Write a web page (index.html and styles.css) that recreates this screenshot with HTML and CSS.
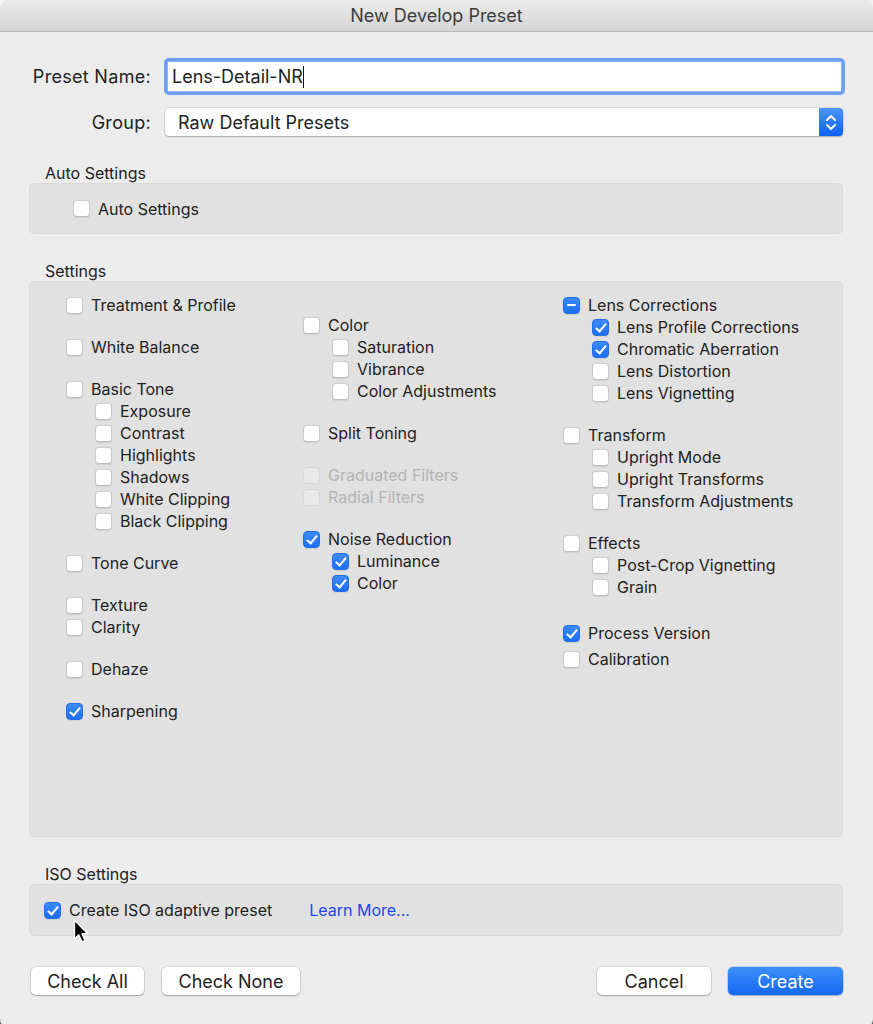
FILE: index.html
```html
<!DOCTYPE html>
<html lang="en">
<head>
<meta charset="utf-8">
<title>New Develop Preset</title>
<link rel="stylesheet" href="styles.css">
</head>
<body>
<div class="window">
  <div class="titlebar">New Develop Preset</div>
  <main class="content">
    <div class="form-row">
      <span class="form-label">Preset Name:</span>
      <div class="text-input">Lens-Detail-NR<span class="caret"></span></div>
    </div>
    <div class="form-row row-group">
      <span class="form-label">Group:</span>
      <div class="select">
        <span class="select-value">Raw Default Presets</span>
        <span class="stepper">
          <svg width="24" height="28" viewBox="0 0 24 28"><path d="M8 12 L12 8 L16 12" fill="none" stroke="#fff" stroke-width="2" stroke-linecap="round" stroke-linejoin="round"/><path d="M8 17 L12 21 L16 17" fill="none" stroke="#fff" stroke-width="2" stroke-linecap="round" stroke-linejoin="round"/></svg>
        </span>
      </div>
    </div>

    <section class="section">
      <h2 class="section-title">Auto Settings</h2>
      <div class="box box-auto">
        <label class="item"><span class="cb"></span>Auto Settings</label>
      </div>
    </section>

    <section class="section">
      <h2 class="section-title">Settings</h2>
      <div class="box box-settings">
        <div class="col col1">
          <div class="grp"><label class="item"><span class="cb"></span>Treatment &amp; Profile</label></div>
          <div class="grp"><label class="item"><span class="cb"></span>White Balance</label></div>
          <div class="grp">
            <label class="item"><span class="cb"></span>Basic Tone</label>
            <label class="item sub"><span class="cb"></span>Exposure</label>
            <label class="item sub"><span class="cb"></span>Contrast</label>
            <label class="item sub"><span class="cb"></span>Highlights</label>
            <label class="item sub"><span class="cb"></span>Shadows</label>
            <label class="item sub"><span class="cb"></span>White Clipping</label>
            <label class="item sub"><span class="cb"></span>Black Clipping</label>
          </div>
          <div class="grp"><label class="item"><span class="cb"></span>Tone Curve</label></div>
          <div class="grp">
            <label class="item"><span class="cb"></span>Texture</label>
            <label class="item"><span class="cb"></span>Clarity</label>
          </div>
          <div class="grp"><label class="item"><span class="cb"></span>Dehaze</label></div>
          <div class="grp"><label class="item"><span class="cb on"></span>Sharpening</label></div>
        </div>
        <div class="col col2">
          <div class="grp">
            <label class="item"><span class="cb"></span>Color</label>
            <label class="item sub"><span class="cb"></span>Saturation</label>
            <label class="item sub"><span class="cb"></span>Vibrance</label>
            <label class="item sub"><span class="cb"></span>Color Adjustments</label>
          </div>
          <div class="grp"><label class="item"><span class="cb"></span>Split Toning</label></div>
          <div class="grp">
            <label class="item dis"><span class="cb"></span>Graduated Filters</label>
            <label class="item dis"><span class="cb"></span>Radial Filters</label>
          </div>
          <div class="grp">
            <label class="item"><span class="cb on"></span>Noise Reduction</label>
            <label class="item sub"><span class="cb on"></span>Luminance</label>
            <label class="item sub"><span class="cb on"></span>Color</label>
          </div>
        </div>
        <div class="col col3">
          <div class="grp">
            <label class="item"><span class="cb mixed"></span>Lens Corrections</label>
            <label class="item sub"><span class="cb on"></span>Lens Profile Corrections</label>
            <label class="item sub"><span class="cb on"></span>Chromatic Aberration</label>
            <label class="item sub"><span class="cb"></span>Lens Distortion</label>
            <label class="item sub"><span class="cb"></span>Lens Vignetting</label>
          </div>
          <div class="grp">
            <label class="item"><span class="cb"></span>Transform</label>
            <label class="item sub"><span class="cb"></span>Upright Mode</label>
            <label class="item sub"><span class="cb"></span>Upright Transforms</label>
            <label class="item sub"><span class="cb"></span>Transform Adjustments</label>
          </div>
          <div class="grp">
            <label class="item"><span class="cb"></span>Effects</label>
            <label class="item sub"><span class="cb"></span>Post-Crop Vignetting</label>
            <label class="item sub"><span class="cb"></span>Grain</label>
          </div>
          <div class="grp grp-process">
            <label class="item"><span class="cb on"></span>Process Version</label>
            <label class="item item-calib"><span class="cb"></span>Calibration</label>
          </div>
        </div>
      </div>
    </section>

    <section class="section">
      <h2 class="section-title">ISO Settings</h2>
      <div class="box box-iso">
        <label class="item"><span class="cb on"></span>Create ISO adaptive preset</label>
        <a class="learn-more">Learn More...</a>
        <svg class="cursor" width="17" height="25" viewBox="0 0 17 25"><path d="M1.5 1.2 L1.5 19.8 L5.8 15.8 L8.9 22.8 L12 21.5 L9 14.7 L14.8 14.7 Z" fill="#000" stroke="#fff" stroke-width="1.3" stroke-linejoin="round"/></svg>
      </div>
    </section>

    <footer class="footer">
      <div class="btn-group">
        <button class="btn btn-check-all">Check All</button>
        <button class="btn btn-check-none">Check None</button>
      </div>
      <div class="btn-group">
        <button class="btn btn-cancel">Cancel</button>
        <button class="btn btn-primary">Create</button>
      </div>
    </footer>
  </main>
</div>
</body>
</html>
```

FILE: styles.css
```css
* { box-sizing: border-box; }

html, body {
  margin: 0;
  padding: 0;
}

html {
  background: linear-gradient(#f2f2f2 50%, #5a5a5a 50%);
}

body {
  font-family: Inter, "Liberation Sans", sans-serif;
  color: #222;
  width: 873px;
  height: 1024px;
  overflow: hidden;
}

.window {
  background: #ececec;
  height: 1028px;
  border-radius: 9px;
  overflow: hidden;
}

.titlebar {
  height: 32px;
  background: linear-gradient(#ebebeb, #d4d4d4);
  border-bottom: 1px solid #b4b4b4;
  text-align: center;
  font-size: 18px;
  line-height: 32px;
  color: #3b3b3b;
}

.content {
  padding: 29px 30px 0 29px;
}

.form-row {
  display: grid;
  grid-template-columns: 122px 1fr;
  column-gap: 14px;
  align-items: center;
}

.row-group {
  margin-top: 16px;
}

.form-label {
  text-align: right;
  font-size: 18px;
  letter-spacing: 0.3px;
}

.text-input {
  height: 31px;
  margin: 0 1px 0 2px;
  background: #fff;
  border: 1px solid #8fb4f2;
  border-radius: 2px;
  box-shadow: 0 0 0 3px #6d9ef2;
  font-size: 18px;
  line-height: 29px;
  padding-left: 4px;
  display: flex;
  align-items: center;
}

.caret {
  display: inline-block;
  width: 1px;
  height: 22px;
  background: #111;
}

.select {
  height: 28px;
  background: #fff;
  border-radius: 4px;
  box-shadow: 0 0 0 0.5px rgba(0,0,0,0.14), 0 1px 1.5px rgba(0,0,0,0.22);
  display: flex;
  align-items: center;
  justify-content: space-between;
  font-size: 18px;
}

.select-value {
  padding-left: 13px;
}

.stepper {
  width: 24px;
  height: 28px;
  border-radius: 0 4px 4px 0;
  background: linear-gradient(#4a95f9, #0a62f2);
  display: block;
}

.stepper svg { display: block; }

.section-title {
  margin: 27px 0 0 16px;
  font-size: 16px;
  font-weight: 400;
  line-height: 20px;
  color: #222;
}

.box {
  background: #e1e1e1;
  border: 1px solid #d9d9d9;
  border-radius: 5px;
}

.box-auto {
  height: 51px;
  padding-left: 43px;
  display: flex;
  align-items: center;
}

.box-settings {
  height: 556px;
  padding: 12px 0 0 36px;
  display: grid;
  grid-template-columns: 237px 260px 1fr;
  align-items: start;
}

.col {
  display: flex;
  flex-direction: column;
  gap: 20px;
}

.col2 { padding-top: 20px; }

.grp {
  display: flex;
  flex-direction: column;
}

.grp-process { margin-top: 4px; }

.item-calib { margin-top: 4px; }

.item {
  display: flex;
  align-items: center;
  height: 22px;
  font-size: 16px;
  color: #222;
  white-space: nowrap;
}

.item.sub { margin-left: 29px; }

.item.dis { color: #b3b3b3; }

.cb {
  position: relative;
  width: 17px;
  height: 17px;
  flex: 0 0 17px;
  margin-right: 8px;
  background: #fff;
  border: 1px solid #c9c9c9;
  border-top-color: #d0d0d0;
  border-bottom-color: #bdbdbd;
  border-radius: 4px;
  box-shadow: 0 0.5px 1px rgba(0,0,0,0.08);
}

.item.dis .cb {
  background: #e9e9e9;
  border-color: #d7d7d7;
  box-shadow: none;
}

.cb.on, .cb.mixed {
  background: linear-gradient(#3c8bf8, #1b6ef3);
  border-color: #1f6ee8;
}

.cb.on::after {
  content: "";
  position: absolute;
  left: 5px;
  top: 1.5px;
  width: 4px;
  height: 9px;
  border-right: 2px solid #fff;
  border-bottom: 2px solid #fff;
  transform: rotate(40deg);
}

.cb.mixed::after {
  content: "";
  position: absolute;
  left: 3px;
  top: 6.5px;
  width: 9px;
  height: 2px;
  background: #fff;
  border-radius: 1px;
}

.box-iso {
  position: relative;
  height: 52px;
  padding-left: 14px;
  display: flex;
  align-items: center;
}

.learn-more {
  margin-left: 37px;
  font-size: 16px;
  color: #1c45f0;
}

.cursor {
  position: absolute;
  left: 43px;
  top: 34px;
}

.footer {
  margin-top: 31px;
  display: flex;
  justify-content: space-between;
  padding-left: 2px;
}

.btn-group {
  display: flex;
  gap: 17px;
}

.btn {
  height: 28px;
  font-family: Inter, "Liberation Sans", sans-serif;
  font-size: 18px;
  color: #222;
  background: #fff;
  border: none;
  border-radius: 5px;
  box-shadow: 0 0 0 0.5px rgba(0,0,0,0.16), 0 1px 1.5px rgba(0,0,0,0.25);
  padding: 0;
}

.btn-check-all { width: 113px; }
.btn-check-none { width: 138px; margin-left: 1px; }
.btn-cancel { width: 114px; }
.btn-primary {
  width: 115px;
  color: #fff;
  background: linear-gradient(#3d8ff9, #1468f2);
  box-shadow: 0 0 0 0.5px rgba(0,60,200,0.3), 0 1px 1.5px rgba(0,0,0,0.2);
}
```
